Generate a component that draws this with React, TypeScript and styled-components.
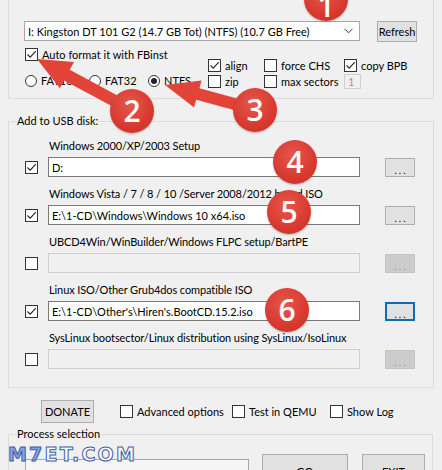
import React from 'react';
import styled, { createGlobalStyle } from 'styled-components';

const GlobalStyle = createGlobalStyle`
  html, body { margin: 0; padding: 0; background: #f0f0f0; }
  body {
    font-family: Lato, "Liberation Sans", sans-serif;
    font-size: 11px;
    color: #000;
  }
  * { box-sizing: border-box; }
`;

const Window = styled.div`
  position: relative;
  width: 442px;
  height: 470px;
  overflow: hidden;
  background: #f0f0f0;
`;

const TopGroup = styled.div`
  margin-left: 8px;
  width: 426px;
  height: 99px;
  border: 1px solid #dcdcdc;
  border-top: none;
  padding: 21px 0 0 15px;
`;

const DriveRow = styled.div`
  display: flex;
  align-items: flex-start;
`;

const Combo = styled.div`
  width: 336px;
  height: 20px;
  border: 1px solid #a8a8a8;
  background: #fff;
  display: flex;
  align-items: center;
  justify-content: space-between;
  padding: 0 6px 0 3px;
  white-space: nowrap;
`;

const WinButton = styled.div<{ $w: number; $h: number; $disabled?: boolean; $focused?: boolean }>`
  width: ${({ $w }) => $w}px;
  height: ${({ $h }) => $h}px;
  flex: none;
  display: flex;
  align-items: center;
  justify-content: center;
  background: ${({ $disabled }) => ($disabled ? '#cccccc' : '#e1e1e1')};
  border: ${({ $disabled, $focused }) =>
    $focused ? '2px solid #0f6cb3' : $disabled ? '1px solid #c4c4c4' : '1px solid #adadad'};
  color: ${({ $disabled }) => ($disabled ? '#8d8d8d' : '#000')};
`;

const RefreshButton = styled(WinButton)`
  margin-left: 17px;
`;

const Dots = styled.span`
  letter-spacing: 2px;
  padding-left: 2px;
  margin-top: 4px;
  font-size: 10px;
`;

const OptionsArea = styled.div`
  display: flex;
  margin-top: 6px;
`;

const LeftOptions = styled.div`
  width: 184px;
  display: flex;
  flex-direction: column;
  gap: 13px;
  padding-left: 1px;
`;

const RadioRow = styled.div`
  display: flex;
`;

const OptionGrid = styled.div`
  margin-top: 9px;
  display: grid;
  grid-template-columns: 56px 80px auto;
  grid-auto-rows: 16px;
  align-items: center;
`;

const Check = styled.label<{ $w?: number }>`
  display: flex;
  align-items: center;
  gap: 4px;
  width: ${({ $w }) => ($w ? `${$w}px` : 'auto')};
  height: 13px;
  white-space: nowrap;
  flex: none;
`;

const Box = styled.span`
  width: 13px;
  height: 13px;
  flex: none;
  border: 1px solid #333;
  background: #fff;
  display: flex;
  align-items: center;
  justify-content: center;
`;

const Radio = styled.label<{ $w: number }>`
  display: flex;
  align-items: center;
  gap: 4px;
  width: ${({ $w }) => $w}px;
  white-space: nowrap;
`;

const RadioCircle = styled.span<{ $on?: boolean }>`
  width: 12px;
  height: 12px;
  border-radius: 50%;
  border: 1px solid #333;
  background: #fff;
  display: flex;
  align-items: center;
  justify-content: center;
  &::after {
    content: '';
    width: 6px;
    height: 6px;
    border-radius: 50%;
    background: ${({ $on }) => ($on ? '#222' : 'transparent')};
  }
`;

const SmallField = styled.div`
  width: 17px;
  height: 15px;
  border: 1px solid #cfcfcf;
  color: #9a9a9a;
  padding-left: 3px;
  display: flex;
  align-items: center;
`;

const Group = styled.fieldset<{ $w: number; $mt: number }>`
  margin: ${({ $mt }) => $mt}px 0 0 8px;
  width: ${({ $w }) => $w}px;
  min-width: 0;
  border: 1px solid #dcdcdc;
  padding: 0 0 0 8px;
`;

const Legend = styled.legend`
  padding: 0 1px 0 0;
  line-height: 14px;
`;

const Rows = styled.div`
  display: flex;
  flex-direction: column;
  gap: 10px;
  padding: 11px 0 18px;
`;

const Row = styled.div`
  display: flex;
  flex-direction: column;
  gap: 4px;
`;

const RowLabel = styled.div`
  margin-left: 32px;
  line-height: 14px;
  white-space: nowrap;
  letter-spacing: -0.1px;
`;

const InputLine = styled.div`
  display: flex;
  align-items: center;
  height: 20px;
  padding-left: 8px;
`;

const PathInput = styled.div<{ $disabled?: boolean }>`
  margin-left: 10px;
  width: 312px;
  height: 20px;
  border: 1px solid ${({ $disabled }) => ($disabled ? '#cfcfcf' : '#7a7a7a')};
  background: ${({ $disabled }) => ($disabled ? '#f0f0f0' : '#fff')};
  display: flex;
  align-items: center;
  padding-left: 3px;
  white-space: nowrap;
`;

const BrowseButton = styled(WinButton)`
  margin-left: 25px;
  margin-top: 1px;
`;

const BottomRow = styled.div`
  display: flex;
  align-items: center;
  margin-top: 12px;
  padding-left: 41px;
`;

const DonateButton = styled(WinButton)`
  margin-right: 26px;
`;

const ProcessArea = styled.div`
  display: flex;
  align-items: flex-start;
  padding: 13px 0 0 8px;
  height: 60px;
`;

const ListBox = styled.div`
  margin-top: 5px;
  width: 224px;
  height: 40px;
  border: 1px solid #a8a8a8;
  background: #f5f5f5;
  margin-right: 13px;
`;

const GoButton = styled(WinButton)`
  margin-right: 14px;
`;

const Watermark = styled.div`
  position: absolute;
  left: 8px;
  top: 443px;
  font-family: "DejaVu Sans", Verdana, sans-serif;
  font-weight: bold;
  font-size: 19px;
  letter-spacing: 2.2px;
  line-height: 22px;
  color: #fbfcff;
  -webkit-text-stroke: 1px #3d5fa6;
  white-space: nowrap;
  span { color: #86a4e2; }
`;

const Overlay = styled.svg`
  position: absolute;
  left: 0;
  top: 0;
  pointer-events: none;
`;

const Badge = styled.div<{ $x: number; $y: number; $shift?: number }>`
  position: absolute;
  left: ${({ $x }) => $x - 22}px;
  top: ${({ $y }) => $y - 22}px;
  width: 44px;
  height: 44px;
  border-radius: 50%;
  background: radial-gradient(circle at 45% 35%, #e6574c 0%, #d8392f 60%, #c42e26 100%);
  box-shadow: 0 1px 2px rgba(0, 0, 0, 0.25);
  color: #fff;
  font-family: "Open Sans", "Liberation Sans", sans-serif;
  font-size: 30px;
  font-weight: 600;
  display: flex;
  align-items: center;
  justify-content: center;
  padding-top: ${({ $shift }) => $shift ?? 0}px;
  line-height: 1;
`;

const CheckMark = () => (
  <svg width="11" height="11" viewBox="0 0 11 11">
    <path d="M1.5 5.5 L4.2 8.2 L9.8 2.2" fill="none" stroke="#222" strokeWidth="1.1" />
  </svg>
);

const Checkbox = ({ label, checked, w }: { label?: string; checked?: boolean; w?: number }) => (
  <Check $w={w}>
    <Box>{checked && <CheckMark />}</Box>
    {label && <span>{label}</span>}
  </Check>
);

type Pt = [number, number];

function arrow(tip: Pt, tail: Pt, headLen: number, headHalf: number, shaftHalf: number) {
  const dx = tail[0] - tip[0];
  const dy = tail[1] - tip[1];
  const len = Math.hypot(dx, dy);
  const ux = dx / len;
  const uy = dy / len;
  const nx = -uy;
  const ny = ux;
  const bx = tip[0] + ux * headLen;
  const by = tip[1] + uy * headLen;
  const pts: Pt[] = [
    tip,
    [bx + nx * headHalf, by + ny * headHalf],
    [bx + nx * shaftHalf, by + ny * shaftHalf],
    [tail[0] + nx * shaftHalf, tail[1] + ny * shaftHalf],
    [tail[0] - nx * shaftHalf, tail[1] - ny * shaftHalf],
    [bx - nx * shaftHalf, by - ny * shaftHalf],
    [bx - nx * headHalf, by - ny * headHalf],
  ];
  return pts.map((p) => p.map((v) => v.toFixed(1)).join(',')).join(' ');
}

const sources = [
  { label: 'Windows 2000/XP/2003 Setup', value: 'D:', checked: true },
  { label: 'Windows Vista / 7 / 8 / 10 /Server 2008/2012 based ISO', value: 'E:\\1-CD\\Windows\\Windows 10 x64.iso', checked: true },
  { label: 'UBCD4Win/WinBuilder/Windows FLPC setup/BartPE', value: '', checked: false, disabled: true },
  { label: 'Linux ISO/Other Grub4dos compatible ISO', value: "E:\\1-CD\\Other's\\Hiren's.BootCD.15.2.iso", checked: true, focused: true },
  { label: 'SysLinux bootsector/Linux distribution using SysLinux/IsoLinux', value: '', checked: false, disabled: true },
];

const badges = [
  { n: 1, x: 326, y: -1, shift: 14 },
  { n: 2, x: 132, y: 111 },
  { n: 3, x: 255, y: 110 },
  { n: 4, x: 295, y: 162 },
  { n: 5, x: 289, y: 212 },
  { n: 6, x: 287, y: 310 },
];

export default function App() {
  return (
    <Window>
      <GlobalStyle />
      <TopGroup>
        <DriveRow>
          <Combo>
            <span>I: Kingston DT 101 G2 (14.7 GB Tot) (NTFS) (10.7 GB Free)</span>
            <svg width="9" height="6" viewBox="0 0 9 6">
              <path d="M0.5 0.8 L4.5 4.8 L8.5 0.8" fill="none" stroke="#333" strokeWidth="1" />
            </svg>
          </Combo>
          <RefreshButton $w={40} $h={21}>Refresh</RefreshButton>
        </DriveRow>
        <OptionsArea>
          <LeftOptions>
            <Checkbox label="Auto format it with FBinst" checked />
            <RadioRow>
              <Radio $w={64}><RadioCircle />FAT16</Radio>
              <Radio $w={59}><RadioCircle />FAT32</Radio>
              <Radio $w={50}><RadioCircle $on />NTFS</Radio>
            </RadioRow>
          </LeftOptions>
          <OptionGrid>
            <Checkbox label="align" checked />
            <Checkbox label="force CHS" />
            <Checkbox label="copy BPB" checked />
            <Checkbox label="zip" />
            <Checkbox label="max sectors" />
            <SmallField>1</SmallField>
          </OptionGrid>
        </OptionsArea>
      </TopGroup>

      <Group $w={426} $mt={15}>
        <Legend>Add to USB disk:</Legend>
        <Rows>
          {sources.map((s) => (
            <Row key={s.label}>
              <RowLabel>{s.label}</RowLabel>
              <InputLine>
                <Checkbox checked={s.checked} />
                <PathInput $disabled={s.disabled}>{s.value}</PathInput>
                <BrowseButton $w={30} $h={19} $disabled={s.disabled} $focused={s.focused}>
                  <Dots>...</Dots>
                </BrowseButton>
              </InputLine>
            </Row>
          ))}
        </Rows>
      </Group>

      <BottomRow>
        <DonateButton $w={53} $h={23}>DONATE</DonateButton>
        <Checkbox label="Advanced options" w={112} />
        <Checkbox label="Test in QEMU" w={98} />
        <Checkbox label="Show Log" />
      </BottomRow>

      <Group $w={425} $mt={4}>
        <Legend>Process selection</Legend>
        <ProcessArea>
          <ListBox />
          <GoButton $w={86} $h={34}>GO</GoButton>
          <WinButton $w={63} $h={34}>EXIT</WinButton>
        </ProcessArea>
      </Group>

      <Watermark>
        <span>M7</span>ET.COM
      </Watermark>

      <Overlay width={442} height={470} viewBox="0 0 442 470">
        <polygon points={arrow([37, 59], [128, 108], 34, 15, 6)} fill="#e2443a" />
        <polygon points={arrow([165, 85], [242, 106], 34, 14, 6)} fill="#e2443a" />
      </Overlay>
      {badges.map((b) => (
        <Badge key={b.n} $x={b.x} $y={b.y} $shift={b.shift}>
          {b.n}
        </Badge>
      ))}
    </Window>
  );
}
